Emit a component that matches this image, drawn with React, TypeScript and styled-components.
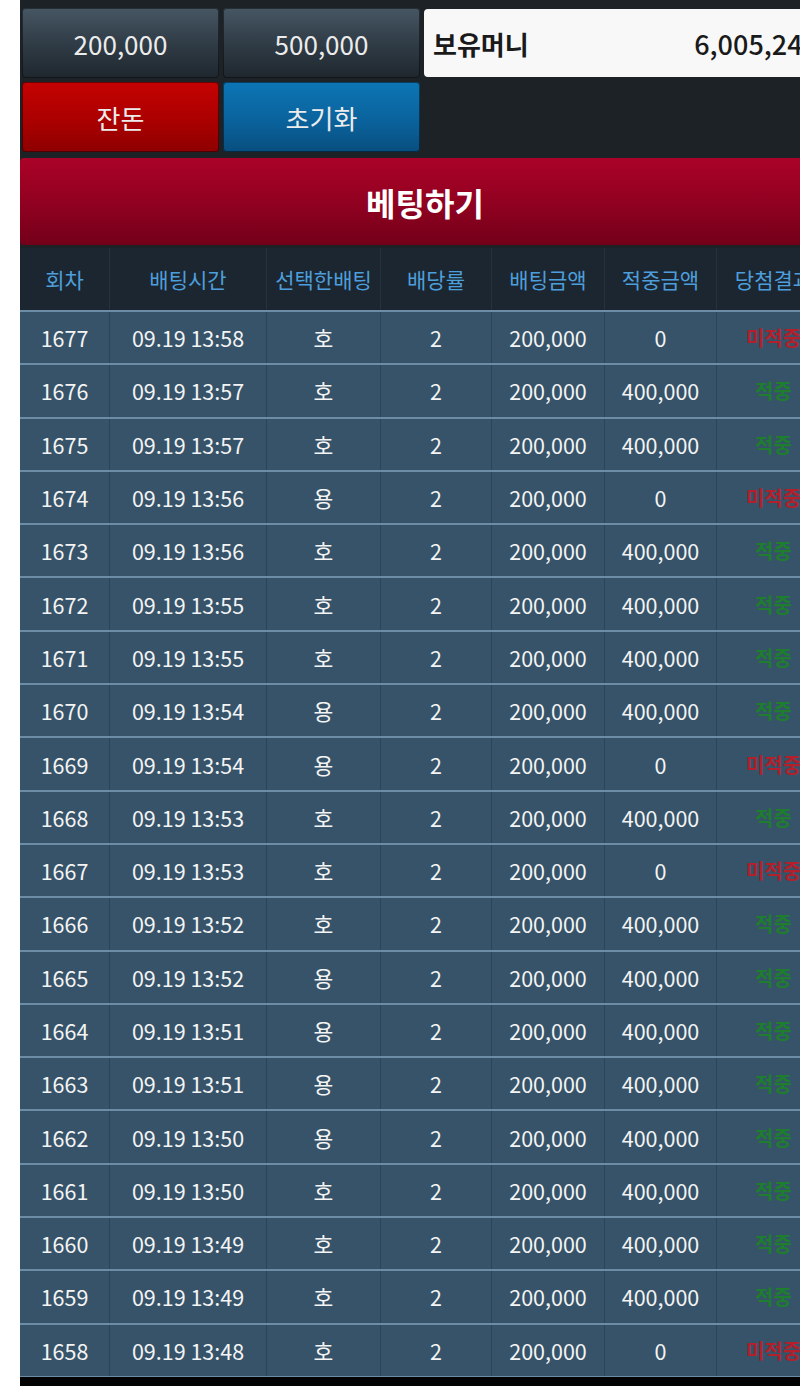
import React from 'react';
import styled, { createGlobalStyle } from 'styled-components';

const GlobalStyle = createGlobalStyle`
  html, body {
    margin: 0;
    padding: 0;
    background: #ffffff;
    overflow: hidden;
  }
  body {
    font-family: "Noto Sans CJK KR", "Noto Sans", sans-serif;
  }
`;

interface IBet {
  round: number;
  time: string;
  pick: string;
  rate: number;
  amount: string;
  win: string;
  hit: boolean;
}

const raw: [number, string, string, boolean][] = [
  [1677, '13:58', '호', false],
  [1676, '13:57', '호', true],
  [1675, '13:57', '호', true],
  [1674, '13:56', '용', false],
  [1673, '13:56', '호', true],
  [1672, '13:55', '호', true],
  [1671, '13:55', '호', true],
  [1670, '13:54', '용', true],
  [1669, '13:54', '용', false],
  [1668, '13:53', '호', true],
  [1667, '13:53', '호', false],
  [1666, '13:52', '호', true],
  [1665, '13:52', '용', true],
  [1664, '13:51', '용', true],
  [1663, '13:51', '용', true],
  [1662, '13:50', '용', true],
  [1661, '13:50', '호', true],
  [1660, '13:49', '호', true],
  [1659, '13:49', '호', true],
  [1658, '13:48', '호', false],
];

const bets: IBet[] = raw.map(([round, t, pick, hit]) => ({
  round,
  time: `09.19 ${t}`,
  pick,
  rate: 2,
  amount: '200,000',
  win: hit ? '400,000' : '0',
  hit,
}));

const headers = ['회차', '배팅시간', '선택한배팅', '배당률', '배팅금액', '적중금액', '당첨결과'];

export default function App() {
  return (
    <>
      <GlobalStyle />
      <Page>
        <Panel>
          <TopGrid>
            <AmountButton>200,000</AmountButton>
            <AmountButton>500,000</AmountButton>
            <MoneyBox>
              <MoneyLabel>보유머니</MoneyLabel>
              <MoneyValue>6,005,240</MoneyValue>
            </MoneyBox>
            <ActionButton tone="red">잔돈</ActionButton>
            <ActionButton tone="blue">초기화</ActionButton>
          </TopGrid>
          <BetBanner>베팅하기</BetBanner>
        </Panel>
        <Table>
          <HeadRow>
            {headers.map((h) => (
              <HeadCell key={h}>{h}</HeadCell>
            ))}
          </HeadRow>
          {bets.map((b) => (
            <Row key={b.round}>
              <Cell>{b.round}</Cell>
              <Cell>{b.time}</Cell>
              <Cell>{b.pick}</Cell>
              <Cell>{b.rate}</Cell>
              <Cell>{b.amount}</Cell>
              <Cell>{b.win}</Cell>
              <ResultCell hit={b.hit}>{b.hit ? '적중' : '미적중'}</ResultCell>
            </Row>
          ))}
        </Table>
        <BottomBar />
      </Page>
    </>
  );
}

const Page = styled.div`
  margin-left: 20px;
  width: 810px;
  background: #1d2227;
`;

const Panel = styled.div`
  padding: 8px 4px 3px 2px;
  background: #1d2227;
  border-top: 3px solid #2c333a;
  margin-top: -3px;
`;

const TopGrid = styled.div`
  display: grid;
  grid-template-columns: 197px 197px 1fr;
  grid-template-rows: 70px 70px;
  gap: 4px;
`;

const buttonBase = `
  display: flex;
  align-items: center;
  justify-content: center;
  border-radius: 4px;
  color: #ececec;
  font-size: 26px;
  box-shadow: inset 0 0 0 1px rgba(0, 0, 0, 0.45);
`;

const AmountButton = styled.div`
  ${buttonBase}
  background: linear-gradient(to bottom, #465663 0%, #2e3a44 55%, #1f272e 100%);
`;

const ActionButton = styled.div<{ tone: 'red' | 'blue' }>`
  ${buttonBase}
  background: ${(p) =>
    p.tone === 'red'
      ? 'linear-gradient(to bottom, #c50202 0%, #a80000 60%, #8e0000 100%)'
      : 'linear-gradient(to bottom, #0d76b5 0%, #0a619a 60%, #084e7e 100%)'};
`;

const MoneyBox = styled.div`
  grid-row: 1;
  grid-column: 3;
  margin: 1px 0;
  display: flex;
  align-items: center;
  justify-content: space-between;
  padding: 0 8px 0 9px;
  background: #f8f8f8;
  border-radius: 4px;
  color: #1a1a1a;
  font-size: 26px;
  font-weight: 700;
`;

const MoneyLabel = styled.span``;

const MoneyValue = styled.span`
  font-weight: 500;
  font-size: 27px;
`;

const BetBanner = styled.div`
  margin: 6px -4px 0 -2px;
  height: 87px;
  display: flex;
  align-items: center;
  justify-content: center;
  border-radius: 4px;
  background: linear-gradient(to bottom, #ab0228 0%, #8f0120 55%, #730019 100%);
  color: #ffffff;
  font-size: 32px;
  font-weight: 700;
`;

const cols = '89px 157px 114px 111px 113px 112px 114px';

const Table = styled.div`
  display: flex;
  flex-direction: column;
`;

const HeadRow = styled.div`
  display: grid;
  grid-template-columns: ${cols};
  height: 62px;
  background: #1c2630;
`;

const HeadCell = styled.div`
  display: flex;
  align-items: center;
  justify-content: center;
  color: #4d9fdc;
  font-size: 21px;
  border-left: 1px solid #27323c;
  &:first-child {
    border-left: none;
  }
`;

const Row = styled.div`
  display: grid;
  grid-template-columns: ${cols};
  height: 53.3px;
  box-sizing: border-box;
  border-top: 2px solid #6d8da6;
  background: #365369;
`;

const Cell = styled.div`
  display: flex;
  align-items: center;
  justify-content: center;
  color: #f4f4f4;
  font-size: 21.5px;
  border-left: 1px solid #2c4458;
  &:first-child {
    border-left: none;
  }
`;

const ResultCell = styled(Cell)<{ hit: boolean }>`
  color: ${(p) => (p.hit ? '#1e7d2e' : '#b3202c')};
  font-size: 20px;
  font-weight: 700;
`;

const BottomBar = styled.div`
  height: 9px;
  background: #030303;
  border-top: 1px solid #6d8da6;
`;
